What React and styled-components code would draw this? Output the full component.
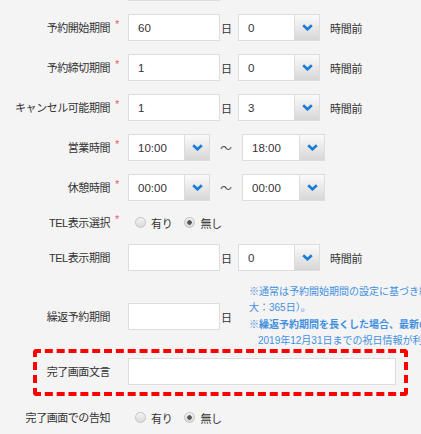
import React from 'react';
import styled, { createGlobalStyle } from 'styled-components';

const GlobalStyle = createGlobalStyle`
  html, body {
    margin: 0;
    padding: 0;
    background: #f4f4f4;
    overflow: hidden;
  }
  body {
    font-family: 'Liberation Sans', 'Noto Sans CJK JP', sans-serif;
    color: #333333;
  }
`;

const Form = styled.div`
  display: flex;
  flex-direction: column;
  margin-top: -32px;
`;

const Row = styled.div`
  display: flex;
  align-items: center;
  padding: ${(p) => p.$pad || '6px 0 7px'};
`;

const Label = styled.div`
  width: ${(p) => p.$w || 128}px;
  flex-shrink: 0;
  box-sizing: border-box;
  padding-right: 18px;
  text-align: right;
  font-size: 11px;
  letter-spacing: -0.45px;
  line-height: 14px;
  white-space: nowrap;
`;

const LabelText = styled.span`
  position: relative;
`;

const Req = styled.span`
  position: absolute;
  left: calc(100% + 5px);
  top: -3px;
  color: #f0566a;
  font-size: 11px;
  line-height: 1;
`;

const TextInput = styled.input`
  width: ${(p) => p.$w}px;
  height: 27px;
  box-sizing: border-box;
  border: 1px solid #dddddd;
  background: #ffffff;
  padding: 0 9px;
  margin: 0;
  font-family: 'Liberation Sans', 'Noto Sans CJK JP', sans-serif;
  font-size: 11.5px;
  color: #333333;
  outline: none;
  flex: ${(p) => (p.$grow ? 1 : 'none')};
`;

const Unit = styled.span`
  font-size: 11px;
  margin: 0 6px 0 1px;
`;

const Suffix = styled.span`
  font-size: 11px;
  letter-spacing: -0.3px;
  margin-left: 10px;
`;

const Tilde = styled.span`
  font-size: 12px;
  margin: 0 10px;
  color: #555555;
`;

const SelectBox = styled.div`
  width: ${(p) => p.$w || 82}px;
  height: 27px;
  box-sizing: border-box;
  border: 1px solid #dddddd;
  background: #ffffff;
  display: flex;
`;

const SelectValue = styled.div`
  flex: 1;
  display: flex;
  align-items: center;
  padding-left: 9px;
  font-size: 11.5px;
`;

const ArrowBtn = styled.div`
  width: 24px;
  border-left: 1px solid #dddddd;
  background: linear-gradient(#fbfbfb, #d6d6d6);
  display: flex;
  align-items: center;
  justify-content: center;
`;

const RadioGroup = styled.div`
  display: flex;
  align-items: center;
  margin-left: 7px;
  height: 17px;
`;

const RadioOption = styled.label`
  display: flex;
  align-items: center;
  font-size: 11px;
  letter-spacing: -0.3px;
  margin-right: 12px;
`;

const RadioCircle = styled.span`
  width: 11px;
  height: 11px;
  box-sizing: border-box;
  border-radius: 50%;
  border: 1px solid #c4c4c4;
  background: ${(p) =>
    p.$checked
      ? 'radial-gradient(circle, #555 0 2px, transparent 2.5px), linear-gradient(#f2f2f2, #d8d8d8)'
      : 'linear-gradient(#f4f4f4, #dadada)'};
  margin-right: 5px;
`;

const Note = styled.div`
  margin-left: 11px;
  font-size: 10px;
  line-height: 16px;
  color: #4390e0;
  white-space: nowrap;
`;

const NoteLine = styled.div`
  font-weight: ${(p) => (p.$bold ? 'bold' : 'normal')};
  padding-left: ${(p) => (p.$indent ? 9 : 0)}px;
  margin-top: ${(p) => (p.$gap ? 1 : 0)}px;
`;

const Highlight = styled.div`
  margin: 0 13px 0 33px;
  border: 4px dashed #ff0000;
  border-radius: 4px;
  padding: 5px 8px 7px 0;
  display: flex;
  align-items: center;
`;

const Chevron = () => (
  <svg width="11" height="7" viewBox="0 0 11 7">
    <polyline points="1.2,1.2 5.5,5.3 9.8,1.2" fill="none" stroke="#1a7ed8" strokeWidth="2.6" />
  </svg>
);

const Select = ({ value, w }) => (
  <SelectBox $w={w}>
    <SelectValue>{value}</SelectValue>
    <ArrowBtn>
      <Chevron />
    </ArrowBtn>
  </SelectBox>
);

const FieldLabel = ({ children, required, w }) => (
  <Label $w={w}>
    <LabelText>
      {children}
      {required && <Req>*</Req>}
    </LabelText>
  </Label>
);

const Radios = ({ checked }) => (
  <RadioGroup>
    <RadioOption>
      <RadioCircle $checked={checked === 'yes'} />
      有り
    </RadioOption>
    <RadioOption>
      <RadioCircle $checked={checked === 'no'} />
      無し
    </RadioOption>
  </RadioGroup>
);

const App = () => (
  <>
    <GlobalStyle />
    <Form>
      <Row>
        <FieldLabel />
        <TextInput $w={92} defaultValue="" />
      </Row>
      <Row>
        <FieldLabel required>予約開始期間</FieldLabel>
        <TextInput $w={92} defaultValue="60" />
        <Unit>日</Unit>
        <Select value="0" />
        <Suffix>時間前</Suffix>
      </Row>
      <Row>
        <FieldLabel required>予約締切期間</FieldLabel>
        <TextInput $w={92} defaultValue="1" />
        <Unit>日</Unit>
        <Select value="0" />
        <Suffix>時間前</Suffix>
      </Row>
      <Row>
        <FieldLabel required>キャンセル可能期間</FieldLabel>
        <TextInput $w={92} defaultValue="1" />
        <Unit>日</Unit>
        <Select value="3" />
        <Suffix>時間前</Suffix>
      </Row>
      <Row>
        <FieldLabel required>営業時間</FieldLabel>
        <Select value="10:00" />
        <Tilde>～</Tilde>
        <Select value="18:00" w={83} />
      </Row>
      <Row>
        <FieldLabel required>休憩時間</FieldLabel>
        <Select value="00:00" />
        <Tilde>～</Tilde>
        <Select value="00:00" w={83} />
      </Row>
      <Row>
        <FieldLabel required>TEL表示選択</FieldLabel>
        <Radios checked="no" />
      </Row>
      <Row>
        <FieldLabel>TEL表示期間</FieldLabel>
        <TextInput $w={92} defaultValue="" />
        <Unit>日</Unit>
        <Select value="0" />
        <Suffix>時間前</Suffix>
      </Row>
      <Row $pad="6px 0 0">
        <FieldLabel>繰返予約期間</FieldLabel>
        <TextInput $w={92} defaultValue="" />
        <Unit>日</Unit>
        <Note>
          <NoteLine>※通常は予約開始期間の設定に基づき繰返予約期間が設定されます（最</NoteLine>
          <NoteLine>大：365日）。</NoteLine>
          <NoteLine $bold $gap>※繰返予約期間を長くした場合、最新の祝日情報が反映されません。</NoteLine>
          <NoteLine $indent>2019年12月31日までの祝日情報が利用されます。</NoteLine>
        </Note>
      </Row>
      <Highlight>
        <FieldLabel w={91}>完了画面文言</FieldLabel>
        <TextInput $grow defaultValue="" />
      </Highlight>
      <Row $pad="13px 0 7px">
        <FieldLabel>完了画面での告知</FieldLabel>
        <Radios checked="no" />
      </Row>
    </Form>
  </>
);

export default App;
